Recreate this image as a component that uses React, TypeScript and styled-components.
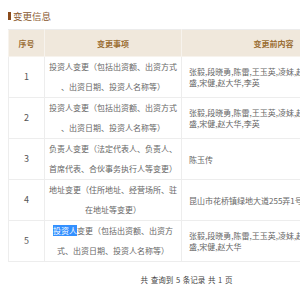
import React from 'react';
import styled, { createGlobalStyle } from 'styled-components';

const GlobalStyle = createGlobalStyle`
  html, body {
    margin: 0;
    padding: 0;
    background: #fff;
    overflow: hidden;
  }
  body {
    font-family: "Noto Sans CJK SC", "Noto Sans", sans-serif;
  }
`;

interface ChangeRecord {
  no: number;
  item: React.ReactNode[];
  before: string[];
}

// --- 페이지 레이아웃 ---
const Page = styled.div`
  padding: 8px;
  width: 357px;
`;

const TitleRow = styled.div`
  display: flex;
  align-items: center;
  gap: 2px;
  height: 16px;
  margin-bottom: 5px;
`;

const TitleBar = styled.span`
  width: 3px;
  height: 8px;
  background: #8a4b1c;
`;

const TitleText = styled.h3`
  margin: 0;
  font-size: 9.5px;
  font-weight: normal;
  color: #8a5a30;
  line-height: 16px;
`;

// --- 테이블 ---
const Table = styled.table`
  width: 357px;
  table-layout: fixed;
  border-collapse: collapse;
`;

const HeadCell = styled.th`
  height: 26px;
  padding: 0;
  background: #f0e8dc;
  color: #9a6d32;
  font-size: 8px;
  font-weight: bold;
  text-align: center;
  border: 1px solid #f7f3ed;
  border-top-color: #ececec;
`;

const Cell = styled.td<{ $align?: 'left' | 'center'; $lineHeight?: number }>`
  height: 40px;
  padding: 0 ${(p) => (p.$align === 'left' ? '7px' : '3px')};
  border: 1px solid #ededed;
  color: #666;
  font-size: 8px;
  line-height: ${(p) => p.$lineHeight ?? 20}px;
  text-align: ${(p) => p.$align ?? 'center'};
  vertical-align: middle;
  white-space: nowrap;
  overflow: hidden;
`;

const NumCell = styled(Cell)`
  font-size: 9px;
  color: #555;
`;

const Line = styled.span`
  display: block;
`;

const Selected = styled.span`
  background: #3390ff;
  color: #fff;
`;

const Footer = styled.div`
  margin-top: 12px;
  text-align: center;
  font-size: 7.5px;
  line-height: 12px;
  color: #444;
  word-spacing: 1px;
`;

const records: ChangeRecord[] = [
  {
    no: 1,
    item: ['投资人变更（包括出资额、出资方式', '、出资日期、投资人名称等）'],
    before: ['张毅,段晓勇,陈雷,王玉英,凌妹,赵', '盛,宋健,赵大华,李英'],
  },
  {
    no: 2,
    item: ['投资人变更（包括出资额、出资方式', '、出资日期、投资人名称等）'],
    before: ['张毅,段晓勇,陈雷,王玉英,凌妹,赵', '盛,宋健,赵大华,李英'],
  },
  {
    no: 3,
    item: ['负责人变更（法定代表人、负责人、', '首席代表、合伙事务执行人等变更）'],
    before: ['陈玉传'],
  },
  {
    no: 4,
    item: ['地址变更（住所地址、经营场所、驻', '在地址等变更）'],
    before: ['昆山市花桥镇绿地大道255弄1号'],
  },
  {
    no: 5,
    item: [
      <>
        <Selected>投资人</Selected>变更（包括出资额、出资方
      </>,
      '式、出资日期、投资人名称等）',
    ],
    before: ['张毅,段晓勇,陈雷,王玉英,凌妹,赵', '盛,宋健,赵大华'],
  },
];

const App: React.FC = () => {
  return (
    <Page>
      <GlobalStyle />
      <TitleRow>
        <TitleBar />
        <TitleText>变更信息</TitleText>
      </TitleRow>
      <Table>
        <colgroup>
          <col style={{ width: 36 }} />
          <col style={{ width: 137 }} />
          <col style={{ width: 184 }} />
        </colgroup>
        <thead>
          <tr>
            <HeadCell>序号</HeadCell>
            <HeadCell>变更事项</HeadCell>
            <HeadCell>变更前内容</HeadCell>
          </tr>
        </thead>
        <tbody>
          {records.map((r) => (
            <tr key={r.no}>
              <NumCell>{r.no}</NumCell>
              <Cell>
                {r.item.map((line, i) => (
                  <Line key={i}>{line}</Line>
                ))}
              </Cell>
              <Cell $align="left" $lineHeight={11}>
                {r.before.map((line, i) => (
                  <Line key={i}>{line}</Line>
                ))}
              </Cell>
            </tr>
          ))}
        </tbody>
      </Table>
      <Footer>共 查询到 5 条记录 共 1 页</Footer>
    </Page>
  );
};

export default App;
